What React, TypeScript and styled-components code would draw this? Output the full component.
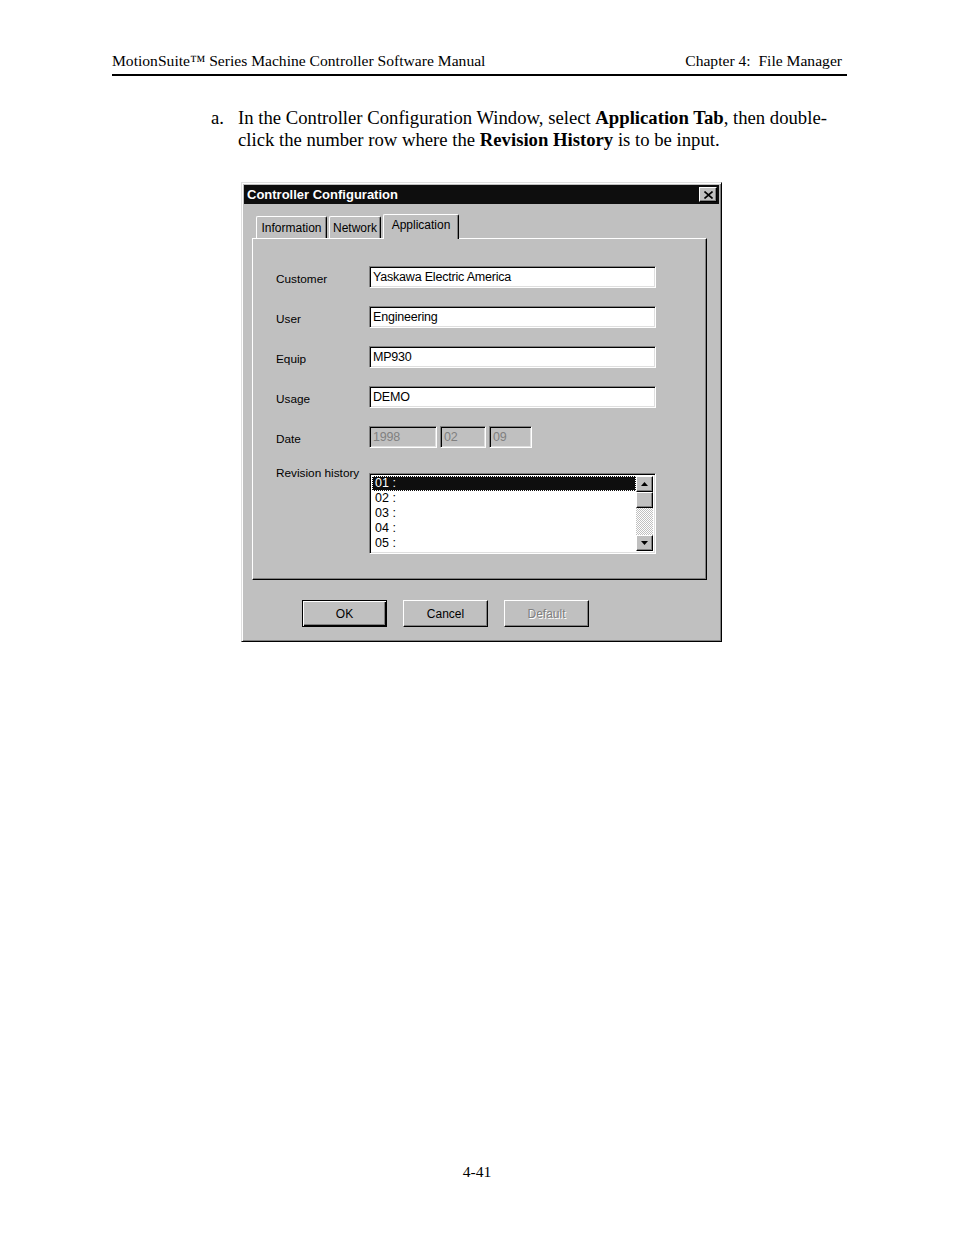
import React from 'react'
import styled, { createGlobalStyle, css } from 'styled-components'

const GlobalStyle = createGlobalStyle`
  html, body {
    margin: 0;
    padding: 0;
    background: #fff;
  }
  body {
    font-family: "Liberation Serif", "Times New Roman", serif;
    color: #000;
  }
`

const face = '#c0c0c0'
const shadow = '#808080'

const raised = css`
  border: 1px solid;
  border-color: #fff #000 #000 #fff;
  box-shadow: inset -1px -1px 0 ${shadow};
`

const sunken = css`
  border: 1px solid;
  border-color: ${shadow} #fff #fff ${shadow};
  box-shadow: inset 1px 1px 0 #000, inset -1px -1px 0 #dfdfdf;
`

const Page = styled.div`
  width: 954px;
  min-height: 1235px;
  display: flex;
  flex-direction: column;
`

const Sheet = styled.div`
  width: 735px;
  margin-left: 112px;
  padding-top: 52px;
`

const RunningHead = styled.header`
  display: flex;
  justify-content: space-between;
  font-size: 15.6px;
  line-height: 18px;
  padding: 0 5px 4px 0;
  border-bottom: 2px solid #000;
`

const Step = styled.div`
  display: grid;
  grid-template-columns: 27px 1fr;
  margin: 31px 0 0 99px;
  font-size: 18.7px;
  line-height: 22px;
  white-space: nowrap;
`

const Dialog = styled.div`
  box-sizing: border-box;
  width: 481px;
  height: 460px;
  margin: 31px 0 0 129px;
  padding: 1px;
  background: ${face};
  border: 1px solid;
  border-color: #dfdfdf #000 #000 #dfdfdf;
  box-shadow: inset 1px 1px 0 #fff, inset -1px -1px 0 ${shadow};
  font-family: "Liberation Sans", Arial, sans-serif;
  font-size: 12px;
  display: flex;
  flex-direction: column;
`

const TitleBar = styled.div`
  margin: 1px;
  height: 19px;
  background: #0e0e0e;
  color: #fff;
  display: flex;
  align-items: center;
  justify-content: space-between;
  padding: 0 2px 0 3px;
  font-weight: bold;
  font-size: 13px;
`

const CloseButton = styled.div`
  box-sizing: border-box;
  width: 18px;
  height: 15px;
  background: ${face};
  ${raised};
  display: flex;
  align-items: center;
  justify-content: center;
`

const TabStrip = styled.div`
  display: flex;
  align-items: flex-end;
  gap: 2px;
  margin: 9px 0 0 13px;
  height: 24px;
  position: relative;
  z-index: 1;
`

const Tab = styled.div<{ $active?: boolean; $width: number }>`
  box-sizing: border-box;
  height: ${(p) => (p.$active ? 25 : 22)}px;
  width: ${(p) => p.$width}px;
  margin-bottom: ${(p) => (p.$active ? -1 : 0)}px;
  background: ${face};
  border: 1px solid;
  border-color: #fff #000 transparent #fff;
  border-bottom: none;
  border-radius: 2px 2px 0 0;
  box-shadow: inset -1px 0 0 ${shadow};
  display: flex;
  align-items: ${(p) => (p.$active ? 'flex-start' : 'center')};
  justify-content: center;
  padding-top: ${(p) => (p.$active ? 3 : 1)}px;
  font-size: 12px;
`

const Panel = styled.div`
  box-sizing: border-box;
  width: 455px;
  height: 342px;
  margin-left: 9px;
  padding: 27px 0 0 22px;
  background: ${face};
  border: 1px solid;
  border-color: #fff #000 #000 #fff;
  box-shadow: inset -1px -1px 0 ${shadow};
`

const FieldGrid = styled.div`
  display: grid;
  grid-template-columns: 94px 287px;
  row-gap: 18px;
  align-items: center;
`

const Label = styled.div<{ $top?: boolean }>`
  font-size: 11.8px;
  padding: 3px 0 0 1px;
  ${(p) => p.$top && css`
    align-self: start;
    padding-top: 0;
  `}
`

const TextBox = styled.div<{ $disabled?: boolean; $width?: number }>`
  box-sizing: border-box;
  height: 22px;
  width: ${(p) => (p.$width ? `${p.$width}px` : '100%')};
  ${sunken};
  background: ${(p) => (p.$disabled ? face : '#fff')};
  color: ${(p) => (p.$disabled ? shadow : '#000')};
  padding: 0 3px;
  display: flex;
  align-items: center;
  font-size: 12.5px;
  letter-spacing: -0.2px;
`

const DateRow = styled.div`
  display: flex;
  gap: 3px;
`

const ListBox = styled.div`
  box-sizing: border-box;
  height: 81px;
  margin-top: 7px;
  ${sunken};
  padding: 2px;
  background: #fff;
  display: flex;
`

const Rows = styled.div`
  flex: 1;
  overflow: hidden;
`

const Row = styled.div<{ $selected?: boolean }>`
  box-sizing: border-box;
  height: 15px;
  line-height: 15px;
  padding-left: 3px;
  font-size: 12.5px;
  ${(p) => p.$selected && css`
    background: #0e0e0e;
    color: #fff;
    outline: 1px dotted #fff;
    outline-offset: -1px;
  `}
`

const ScrollBar = styled.div`
  width: 17px;
  display: flex;
  flex-direction: column;
`

const ScrollButton = styled.div`
  box-sizing: border-box;
  height: 16px;
  background: ${face};
  ${raised};
  display: flex;
  align-items: center;
  justify-content: center;
`

const Track = styled.div`
  flex: 1;
  background: repeating-conic-gradient(#fff 0 25%, ${face} 0 50%) 0 0 / 2px 2px;
`

const ButtonRow = styled.div`
  display: flex;
  gap: 16px;
  margin: 20px 0 0 59px;
`

const Button = styled.div<{ $default?: boolean; $disabled?: boolean }>`
  box-sizing: border-box;
  width: 85px;
  height: 27px;
  background: ${face};
  ${raised};
  display: flex;
  align-items: center;
  justify-content: center;
  font-size: 12px;
  color: ${(p) => (p.$disabled ? shadow : '#000')};
  ${(p) => p.$disabled && css`text-shadow: 1px 1px 0 #fff;`}
  ${(p) => p.$default && css`
    border: 1px solid #000;
    box-shadow: inset 1px 1px 0 #fff, inset -1px -1px 0 #000, inset -2px -2px 0 ${shadow};
  `}
`

const Folio = styled.footer`
  margin-top: auto;
  padding-bottom: 54px;
  text-align: center;
  font-size: 15.6px;
  line-height: 18px;
`

const Arrow = ({ up }: { up?: boolean }) => (
  <svg width="7" height="4" viewBox="0 0 7 4">
    <polygon points={up ? '3.5,0 7,4 0,4' : '0,0 7,0 3.5,4'} fill="#000" />
  </svg>
)

const fields = [
  { label: 'Customer', value: 'Yaskawa Electric America' },
  { label: 'User', value: 'Engineering' },
  { label: 'Equip', value: 'MP930' },
  { label: 'Usage', value: 'DEMO' },
]

const history = ['01 :', '02 :', '03 :', '04 :', '05 :', '06 :']

const App: React.FC = () => {
  return (
    <>
      <GlobalStyle />
      <Page>
        <Sheet>
          <RunningHead>
            <span>MotionSuite™ Series Machine Controller Software Manual</span>
            <span>Chapter 4:&nbsp; File Manager</span>
          </RunningHead>

          <Step>
            <span>a.</span>
            <span>
              In the Controller Configuration Window, select <b>Application Tab</b>, then double-
              <br />
              click the number row where the <b>Revision History</b> is to be input.
            </span>
          </Step>

          <Dialog>
            <TitleBar>
              <span>Controller Configuration</span>
              <CloseButton>
                <svg width="9" height="8" viewBox="0 0 9 8">
                  <path d="M0.5 0.5 L8.5 7.5 M8.5 0.5 L0.5 7.5" stroke="#000" strokeWidth="1.6" />
                </svg>
              </CloseButton>
            </TitleBar>

            <TabStrip>
              <Tab $width={71}>Information</Tab>
              <Tab $width={52}>Network</Tab>
              <Tab $width={76} $active>Application</Tab>
            </TabStrip>

            <Panel>
              <FieldGrid>
                {fields.map((f) => (
                  <React.Fragment key={f.label}>
                    <Label>{f.label}</Label>
                    <TextBox>{f.value}</TextBox>
                  </React.Fragment>
                ))}
                <Label>Date</Label>
                <DateRow>
                  <TextBox $disabled $width={68}>1998</TextBox>
                  <TextBox $disabled $width={46}>02</TextBox>
                  <TextBox $disabled $width={43}>09</TextBox>
                </DateRow>
                <Label $top>Revision history</Label>
                <ListBox>
                  <Rows>
                    {history.map((h, i) => (
                      <Row key={h} $selected={i === 0}>{h}</Row>
                    ))}
                  </Rows>
                  <ScrollBar>
                    <ScrollButton><Arrow up /></ScrollButton>
                    <ScrollButton />
                    <Track />
                    <ScrollButton><Arrow /></ScrollButton>
                  </ScrollBar>
                </ListBox>
              </FieldGrid>
            </Panel>

            <ButtonRow>
              <Button $default>OK</Button>
              <Button>Cancel</Button>
              <Button $disabled>Default</Button>
            </ButtonRow>
          </Dialog>
        </Sheet>

        <Folio>4-41</Folio>
      </Page>
    </>
  )
}

export default App
